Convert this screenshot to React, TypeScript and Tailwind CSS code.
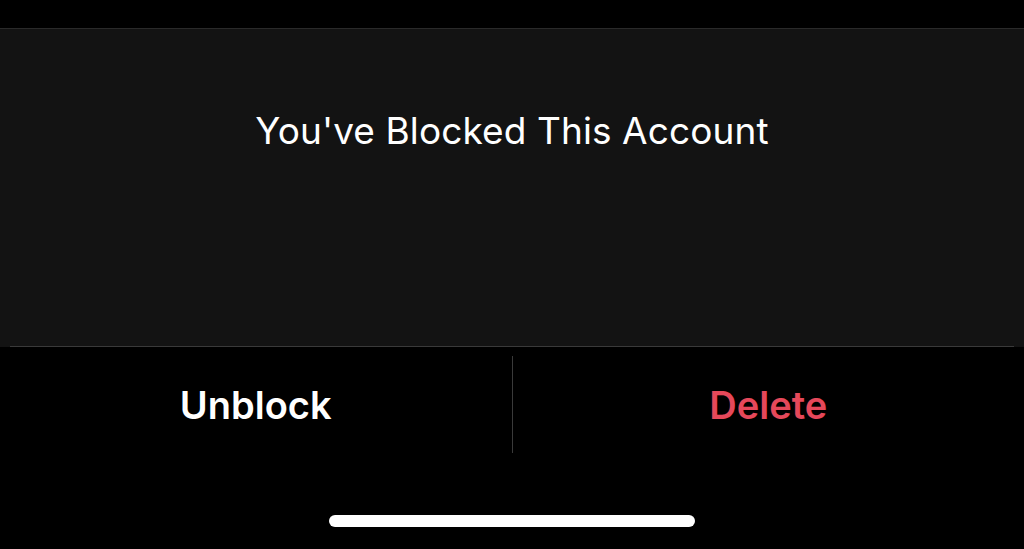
import React from "react";

export default function App() {
  return (
    <div className="w-[1024px] h-[549px] bg-black flex flex-col overflow-hidden" style={{ fontFamily: "Inter, 'Liberation Sans', sans-serif" }}>
      <div className="h-[28px] shrink-0" />
      <div className="h-[319px] shrink-0 bg-[#131313] border-t border-[#2a2a2a] flex flex-col">
        <div className="flex-1 flex justify-center pt-[80px]">
          <span className="text-white text-[37px] leading-[44px] tracking-[0.1px]">You've Blocked This Account</span>
        </div>
        <div className="mx-[10px] h-px bg-[#3a3a3a]" />
      </div>
      <div className="flex h-[118px] shrink-0 items-stretch pt-[9px] pb-[12px]">
        <div className="flex-1 flex items-center justify-center">
          <span className="text-white text-[38px] font-semibold leading-[44px]">Unblock</span>
        </div>
        <div className="w-px bg-[#3a3a3a]" />
        <div className="flex-1 flex items-center justify-center">
          <span className="text-[#e5485a] text-[38px] font-semibold leading-[44px]">Delete</span>
        </div>
      </div>
      <div className="flex-1 flex justify-center pt-[50px]">
        <div className="w-[366px] h-[12px] rounded-full bg-white" />
      </div>
    </div>
  );
}
